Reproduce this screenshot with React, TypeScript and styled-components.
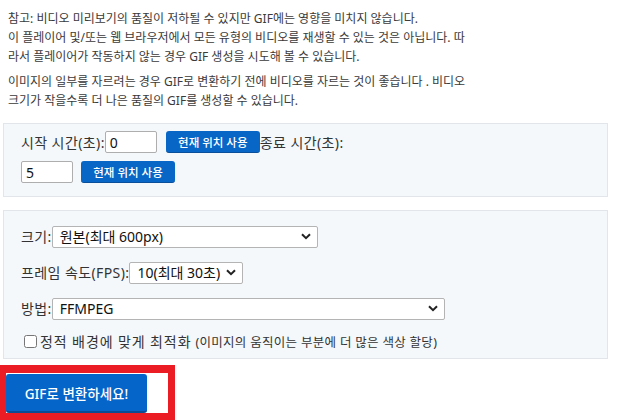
import styled, { createGlobalStyle } from 'styled-components';

const GlobalStyle = createGlobalStyle`
    body {
        margin: 0;
        background: #ffffff;
        font-family: "Noto Sans", "Noto Sans CJK KR", sans-serif;
        color: #333333;
    }
`;

const Page = styled.div`
    width: 633px;
    height: 420px;
    overflow: hidden;
    padding-top: 9px;
    box-sizing: border-box;
`;

const Note = styled.p`
    margin: 0 0 6px 8px;
    font-size: 12px;
    line-height: 19px;
    white-space: nowrap;
    color: #3a3a3a;
`;

const Panel = styled.div<{ $top: number; $pad: string }>`
    margin: ${(p) => p.$top}px 0 0 3px;
    width: 605px;
    box-sizing: border-box;
    background: #f4f8fb;
    border: 1px solid #e2e5e9;
    padding: ${(p) => p.$pad};
    display: flex;
    flex-direction: column;
`;

const Row = styled.div<{ $height: number }>`
    display: flex;
    align-items: center;
    height: ${(p) => p.$height}px;
    padding-left: 1px;
`;

const Label = styled.label`
    font-size: 14px;
    letter-spacing: 0.4px;
    color: #333333;
    white-space: nowrap;
`;

const TextInput = styled.input<{ $after: number }>`
    width: 52px;
    height: 22px;
    box-sizing: border-box;
    border: 1px solid #aeaeae;
    border-radius: 2px;
    padding: 0 4px;
    font-family: "Noto Sans", "Noto Sans CJK KR", sans-serif;
    font-size: 14px;
    color: #111111;
    background: #ffffff;
    margin-right: ${(p) => p.$after}px;
`;

const SmallButton = styled.button`
    height: 22px;
    width: 94px;
    box-sizing: border-box;
    padding: 0;
    border: none;
    border-bottom: 1px solid #0a4f9a;
    border-radius: 3px;
    background: #0866c6;
    color: #ffffff;
    font-family: "Noto Sans", "Noto Sans CJK KR", sans-serif;
    font-size: 11.5px;
    font-weight: 500;
    cursor: pointer;
`;

const SelectWrap = styled.div<{ $width: number }>`
    position: relative;
    width: ${(p) => p.$width}px;
    height: 22px;
`;

const Select = styled.select`
    appearance: none;
    width: 100%;
    height: 100%;
    box-sizing: border-box;
    border: 1px solid #b4b4b4;
    border-radius: 2px;
    background: #ffffff;
    padding: 0 22px 0 7px;
    font-family: "Noto Sans", "Noto Sans CJK KR", sans-serif;
    font-size: 14px;
    color: #111111;
`;

const Chevron = styled.svg`
    position: absolute;
    right: 7px;
    top: 8px;
    pointer-events: none;
`;

const CheckRow = styled.label`
    display: flex;
    align-items: center;
    height: 30px;
    padding-left: 4px;
    font-size: 14px;
    letter-spacing: 0.9px;
    color: #333333;
    white-space: nowrap;
`;

const Check = styled.input`
    width: 13px;
    height: 13px;
    margin: 0 3px 0 0;
`;

const Hint = styled.span`
    font-size: 12.5px;
    letter-spacing: 0.3px;
    margin-left: 4px;
`;

const Highlight = styled.div`
    margin-top: 6px;
    display: inline-block;
    border: 8px solid #ec1c24;
    border-left-width: 6px;
    border-right-width: 7px;
    padding: 1px 21px 0 0;
    background: #ffffff;
`;

const ConvertButton = styled.button`
    display: block;
    width: 141px;
    height: 39px;
    border: none;
    border-bottom: 2px solid #0b4c93;
    border-radius: 3px;
    background: #0565c8;
    color: #ffffff;
    font-family: "Noto Sans", "Noto Sans CJK KR", sans-serif;
    font-size: 13.5px;
    font-weight: 500;
    cursor: pointer;
`;

function Dropdown({ width, value }: { width: number; value: string }) {
    return (
        <SelectWrap $width={width}>
            <Select defaultValue={value}>
                <option>{value}</option>
            </Select>
            <Chevron width="10" height="7" viewBox="0 0 10 7">
                <path d="M1 1.2 L5 5.2 L9 1.2" fill="none" stroke="#222" strokeWidth="2" />
            </Chevron>
        </SelectWrap>
    );
}

export default function App() {
    return (
        <Page>
            <GlobalStyle />
            <Note>
                참고: 비디오 미리보기의 품질이 저하될 수 있지만 GIF에는 영향을 미치지 않습니다.
                <br />
                이 플레이어 및/또는 웹 브라우저에서 모든 유형의 비디오를 재생할 수 있는 것은 아닙니다. 따
                <br />
                라서 플레이어가 작동하지 않는 경우 GIF 생성을 시도해 볼 수 있습니다.
            </Note>
            <Note>
                이미지의 일부를 자르려는 경우 GIF로 변환하기 전에 비디오를 자르는 것이 좋습니다 . 비디오
                <br />
                크기가 작을수록 더 나은 품질의 GIF를 생성할 수 있습니다.
            </Note>
            <Panel $top={13} $pad="7px 16px 13px">
                <Row $height={22}>
                    <Label>시작 시간(초):</Label>
                    <TextInput $after={9} defaultValue="0" />
                    <SmallButton>현재 위치 사용</SmallButton>
                    <Label>종료 시간(초):</Label>
                </Row>
                <Row $height={8} />
                <Row $height={22}>
                    <TextInput $after={8} defaultValue="5" />
                    <SmallButton>현재 위치 사용</SmallButton>
                </Row>
            </Panel>
            <Panel $top={13} $pad="7px 16px 2px">
                <Row $height={36}>
                    <Label>크기:</Label>
                    <Dropdown width={266} value="원본(최대 600px)" />
                </Row>
                <Row $height={36}>
                    <Label>프레임 속도(FPS):</Label>
                    <Dropdown width={114} value="10(최대 30초)" />
                </Row>
                <Row $height={36}>
                    <Label>방법:</Label>
                    <Dropdown width={393} value="FFMPEG" />
                </Row>
                <CheckRow>
                    <Check type="checkbox" />
                    정적 배경에 맞게 최적화
                    <Hint>(이미지의 움직이는 부분에 더 많은 색상 할당)</Hint>
                </CheckRow>
            </Panel>
            <Highlight>
                <ConvertButton>GIF로 변환하세요!</ConvertButton>
            </Highlight>
        </Page>
    );
}
